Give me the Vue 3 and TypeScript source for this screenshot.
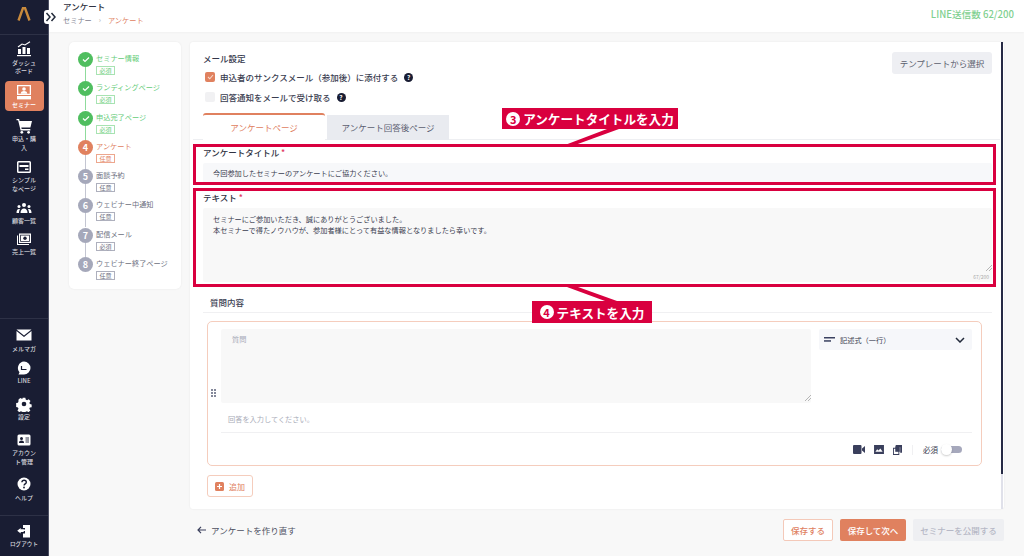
<script setup lang="ts">
type Nav = { label: string; icon: string; active?: boolean }
const topNav: Nav[] = [
  { label: 'ダッシュボード', icon: 'dash' },
  { label: 'セミナー', icon: 'seminar', active: true },
  { label: '申込・購入', icon: 'cart' },
  { label: 'シンプルなページ', icon: 'page' },
  { label: '顧客一覧', icon: 'people' },
  { label: '売上一覧', icon: 'money' },
]
const bottomNav: Nav[] = [
  { label: 'メルマガ', icon: 'mail' },
  { label: 'LINE', icon: 'line' },
  { label: '設定', icon: 'gear' },
  { label: 'アカウント管理', icon: 'account' },
  { label: 'ヘルプ', icon: 'help' },
]
const steps = [
  { n: '', label: 'セミナー情報', tag: '必須', state: 'done' },
  { n: '', label: 'ランディングページ', tag: '必須', state: 'done' },
  { n: '', label: '申込完了ページ', tag: '必須', state: 'done' },
  { n: '4', label: 'アンケート', tag: '任意', state: 'current' },
  { n: '5', label: '面談予約', tag: '任意', state: 'todo' },
  { n: '6', label: 'ウェビナー中通知', tag: '任意', state: 'todo' },
  { n: '7', label: '配信メール', tag: '必須', state: 'todo' },
  { n: '8', label: 'ウェビナー終了ページ', tag: '任意', state: 'todo' },
]
</script>

<template>
  <div class="app">
    <aside class="side">
      <div class="logo">
        <svg width="14" height="14" viewBox="0 0 14 14"><path d="M1.500 13.500 6 1h2l4.500 12.500" fill="none" stroke="#c98a3c" stroke-width="2.400"/></svg>
      </div>
      <nav class="nav nav-top">
        <div v-for="n in topNav" :key="n.label" class="nav-item" :class="{ active: n.active }">
          <svg class="ico" viewBox="0 0 16 16" fill="#fff">
            <template v-if="n.icon === 'dash'">
              <rect x="2" y="8" width="3" height="5"/><rect x="6.500" y="6" width="3" height="7"/><rect x="11" y="7" width="3" height="6"/><rect x="1" y="14" width="14" height="1.200"/>
              <path d="M2 6 6 3l3 1 5-3.200" fill="none" stroke="#fff" stroke-width="1.100"/>
            </template>
            <template v-else-if="n.icon === 'seminar'">
              <path d="M1 1h14v10H1z M2.300 2.300v7.400h11.400V2.300z" fill-rule="evenodd"/><circle cx="8" cy="5" r="1.800"/><path d="M4.700 9.700c.3-2 1.600-2.600 3.300-2.600s3 .6 3.300 2.600z"/><rect x="1" y="12" width="14" height="3.400"/>
            </template>
            <template v-else-if="n.icon === 'cart'">
              <path d="M.5 1h2.600l.5 2H16l-1.600 6.500H5.300l.4 1.600h8.600v1.300H4.600L2.100 2.300H.5z"/><circle cx="5.800" cy="14.300" r="1.400"/><circle cx="12.600" cy="14.300" r="1.400"/>
            </template>
            <template v-else-if="n.icon === 'page'">
              <path d="M2.500 2h11A1.500 1.500 0 0 1 15 3.500v9a1.500 1.500 0 0 1-1.500 1.500h-11A1.500 1.500 0 0 1 1 12.500v-9A1.500 1.500 0 0 1 2.500 2z M2.500 3.500v9h11v-9z" fill-rule="evenodd"/><rect x="3.500" y="6" width="9" height="2"/><rect x="9" y="9.500" width="3.500" height="1.500"/>
            </template>
            <template v-else-if="n.icon === 'people'">
              <circle cx="8" cy="5" r="2"/><circle cx="3" cy="6.500" r="1.500"/><circle cx="13" cy="6.500" r="1.500"/><path d="M4.500 13c0-3 1.500-4.500 3.500-4.500s3.500 1.500 3.500 4.500z"/><path d="M.5 13c0-2.500.8-4 2.500-4 .5 0 .8.100 1 .3-.7.900-1 2.200-1 3.700z"/><path d="M15.500 13c0-2.500-.8-4-2.500-4-.5 0-.8.100-1 .3.700.900 1 2.200 1 3.700z"/>
            </template>
            <template v-else>
              <path d="M3 1.500h12v9.500H3z M4.200 2.700v7.100h9.600V2.700z" fill-rule="evenodd"/><rect x="5" y="3.500" width="8" height="5.500"/><circle cx="9" cy="6.200" r="1.700" fill="#191d33"/><path d="M1 3.500h1V12h11v1H1z"/>
            </template>
          </svg>
          <span class="nav-label">{{ n.label }}</span>
        </div>
      </nav>
      <nav class="nav nav-bottom">
        <div v-for="n in bottomNav" :key="n.label" class="nav-item">
          <svg class="ico" viewBox="0 0 16 16" fill="#fff">
            <template v-if="n.icon === 'mail'">
              <path d="M.5 2.500h15L8 8.500z"/><path d="M.5 4v9.500h15V4L8 10z"/>
            </template>
            <template v-else-if="n.icon === 'line'">
              <path d="M8 1.500a6.500 6.500 0 0 1 0 13H2.500l1-2.300A6.500 6.500 0 0 1 8 1.500z"/><path d="M5.500 6v3.500h5" fill="none" stroke="#191d33" stroke-width="1.200"/>
            </template>
            <template v-else-if="n.icon === 'gear'">
              <path d="M6.500 1h3l.4 2 1.500.7 1.800-1.100 2 2.200-1.200 1.700.5 1.500 2 .5v3l-2 .4-.6 1.500 1.200 1.700-2.100 2-1.700-1.100-1.500.6-.4 2h-3l-.4-2-1.500-.6-1.800 1.100-2-2 1.200-1.800-.6-1.500-2-.4V7l2-.5.6-1.500L1.800 3.300l2-2.100L5.600 2.300l1-.4z" transform="translate(.8 .8) scale(.9)"/><circle cx="8" cy="8" r="2.300" fill="#191d33"/>
            </template>
            <template v-else-if="n.icon === 'account'">
              <rect x="1.500" y="2.500" width="13" height="11" rx="1.500"/><circle cx="5.500" cy="6.500" r="1.500" fill="#191d33"/><path d="M3 11c0-1.800 1-2.500 2.500-2.500S8 9.200 8 11z" fill="#191d33"/><path d="M9.500 6H13M9.500 8H13M9.500 10H13" stroke="#191d33" stroke-width=".9"/>
            </template>
            <template v-else>
              <circle cx="8" cy="8" r="6.500"/><path d="M5.900 6.300C6 4.900 6.900 4.300 8.100 4.300c1.300 0 2.200.8 2.200 1.900 0 1.700-2.200 1.700-2.200 3.300" fill="none" stroke="#191d33" stroke-width="1.400"/><circle cx="8" cy="11.500" r=".9" fill="#191d33"/>
            </template>
          </svg>
          <span class="nav-label">{{ n.label }}</span>
        </div>
      </nav>
      <div class="logout">
        <svg class="ico" viewBox="0 0 16 16" fill="#fff"><path d="M7 2h7v12.500H7v-4h2V8H5V6.500h4V5H7z"/><path d="M5 5 1.500 7.800 5 10.500V9h3V6.500H5z" transform="translate(-.3 0)"/></svg>
        <span class="nav-label">ログアウト</span>
      </div>
    </aside>

    <div class="page">
      <header class="top">
        <button class="toggle" aria-label="開閉">
          <svg width="12" height="10" viewBox="0 0 12 10" fill="none" stroke="#222a3a" stroke-width="1.500"><path d="M1.500 1 5 5 1.500 9M6.500 1 10 5 6.500 9"/></svg>
        </button>
        <div class="crumbs">
          <div class="page-title">アンケート</div>
          <div class="trail"><span>セミナー</span><span class="sep">›</span><span class="here">アンケート</span></div>
        </div>
        <div class="quota">LINE送信数 62/200</div>
      </header>

      <div class="body">
        <section class="stepper">
          <div v-for="(s, i) in steps" :key="s.label" class="step" :class="s.state">
            <div class="rail">
              <span class="dot">
                <svg v-if="s.state === 'done'" width="8" height="7" viewBox="0 0 8 7" fill="none" stroke="#fff" stroke-width="1.200"><path d="M1 3.500 3 5.500 7 1.500"/></svg>
                <template v-else>{{ s.n }}</template>
              </span>
              <span v-if="i < steps.length - 1" class="stem"></span>
            </div>
            <div class="step-text">
              <div class="step-label">{{ s.label }}</div>
              <span class="tag">{{ s.tag }}</span>
            </div>
          </div>
        </section>

        <div class="main-col">
          <section class="card">
            <div class="mail-head">
              <div class="mail-settings">
                <div class="mail-title">メール設定</div>
                <label class="check-row">
                  <span class="box on"><svg width="7" height="6" viewBox="0 0 7 6" fill="none" stroke="#f7d8cb" stroke-width="1.100"><path d="M1 3 2.800 4.800 6 1"/></svg></span>
                  申込者のサンクスメール（参加後）に添付する
                  <span class="q">?</span>
                </label>
                <label class="check-row">
                  <span class="box"></span>
                  回答通知をメールで受け取る
                  <span class="q">?</span>
                </label>
              </div>
              <button class="tpl">テンプレートから選択</button>
            </div>

            <div class="tabs">
              <div class="tab sel">アンケートページ</div>
              <div class="tab">アンケート回答後ページ</div>
            </div>

            <div class="fields">
              <div class="field-label title-label">アンケートタイトル <em>*</em></div>
              <div class="input">今回参加したセミナーのアンケートにご協力ください。</div>
              <div class="field-label text-label">テキスト <em>*</em></div>
              <div class="textarea">
                <div>セミナーにご参加いただき、誠にありがとうございました。</div>
                <div>本セミナーで得たノウハウが、参加者様にとって有益な情報となりましたら幸いです。</div>
                <span class="count">67/200</span>
                <svg class="grip" width="7" height="7" viewBox="0 0 7 7" stroke="#999" stroke-width=".7"><path d="M1 7 7 1M4 7 7 4"/></svg>
              </div>
            </div>

            <div class="q-head">質問内容</div>

            <div class="q-card">
              <div class="drag"><i></i><i></i><i></i><i></i><i></i><i></i></div>
              <div class="q-inner">
                <div class="q-top">
                  <div class="q-area">質問
                    <svg class="grip" width="7" height="7" viewBox="0 0 7 7" stroke="#999" stroke-width=".7"><path d="M1 7 7 1M4 7 7 4"/></svg>
                  </div>
                  <div class="select">
                    <svg width="11" height="5" viewBox="0 0 11 5" fill="#3a4160"><rect width="11" height="1.500"/><rect y="3.200" width="7" height="1.500"/></svg>
                    <span>記述式（一行）</span>
                    <svg class="chev" width="10" height="6" viewBox="0 0 10 6" fill="none" stroke="#222a3a" stroke-width="1.500"><path d="M1 1 5 5 9 1"/></svg>
                  </div>
                </div>
                <div class="answer">回答を入力してください。</div>
                <div class="q-tools">
                  <svg width="12" height="9" viewBox="0 0 12 9" fill="#3a3f5c"><rect width="8.500" height="9" rx="1"/><path d="M9 3.500 12 1v7L9 5.500z"/></svg>
                  <svg width="10" height="9" viewBox="0 0 11 10" fill="#3a3f5c"><path d="M0 0h11v10H0z M1.500 7.500h8L7 4 5 6 3.500 4.800z" fill-rule="evenodd"/></svg>
                  <svg width="9" height="10" viewBox="0 0 10 11" fill="#3a3f5c"><path d="M3 0h7v8.500H8V2.500H3z"/><path d="M0 3h7v8H0z M1 4v6h5V4z" fill-rule="evenodd"/><rect x="2.500" y="1.500" width="5" height="6"/></svg>
                  <span class="tool-sep"></span>
                  <span class="req">必須</span>
                  <span class="switch"><span class="knob"></span></span>
                </div>
              </div>
            </div>

            <button class="add">
              <svg width="9" height="9" viewBox="0 0 9 9"><rect width="9" height="9" rx="1.500" fill="#e0815f"/><path d="M4.500 2v5M2 4.500h5" stroke="#fff" stroke-width="1.200"/></svg>
              追加
            </button>

            <div class="scroll"><span></span></div>
          </section>

          <footer class="foot">
            <div class="back">
              <svg width="9" height="8" viewBox="0 0 9 8" fill="none" stroke="#3a3f5c" stroke-width="1.200"><path d="M4 .8 1 4l3 3.200M1 4h8"/></svg>
              アンケートを作り直す
            </div>
            <div class="foot-btns">
              <button class="btn ghost">保存する</button>
              <button class="btn solid">保存して次へ</button>
              <button class="btn off">セミナーを公開する</button>
            </div>
          </footer>
        </div>
      </div>
    </div>

    <div class="mark mark-title"></div>
    <div class="mark mark-text"></div>
    <svg class="connectors" width="1024" height="556" viewBox="0 0 1024 556">
      <path d="M607 129h12l-44 16h-10z" fill="#d9003f"/>
      <path d="M567 287h11l39 14h-12z" fill="#d9003f"/>
    </svg>
    <div class="callout call-3"><span class="num">3</span>アンケートタイトルを入力</div>
    <div class="callout call-4"><span class="num">4</span>テキストを入力</div>
  </div>
</template>

<style>
html, body { margin: 0; padding: 0; }
</style>

<style scoped>
* { box-sizing: border-box; }
.app {
  position: relative;
  display: flex;
  width: 1024px;
  height: 556px;
  overflow: hidden;
  background: #f8f8f8;
  font-family: "Noto Sans CJK JP", "Noto Sans", sans-serif;
  color: #3a3f52;
  font-size: 8px;
}
.side {
  width: 49px;
  flex: none;
  display: flex;
  flex-direction: column;
  background: #191d33;
  border-right: 1px solid #4b4f63;
}
.logo {
  height: 35px;
  display: flex;
  align-items: center;
  justify-content: center;
  padding-bottom: 6px;
  border-bottom: 1px solid #2d3146;
}
.nav { display: flex; flex-direction: column; align-items: center; }
.nav-top { padding-top: 5px; gap: 5.5px; height: 283px; }
.nav-top .nav-item:last-child .nav-label { margin-top: 0; }
.nav-bottom { padding-top: 7px; gap: 9px; height: 197px; border-top: 1px solid #2d3146; }
.nav-bottom .nav-item:first-child { margin-bottom: -3.5px; }
.nav-item {
  width: 39px;
  display: flex;
  flex-direction: column;
  align-items: center;
  border-radius: 4px;
  padding-top: 1px;
}
.nav-item.active { background: #e0815f; padding: 3px 0 2px; }
.ico { width: 16px; height: 16px; flex: none; }
.nav-label {
  margin-top: 1.500px;
  width: 25px;
  text-align: center;
  font-size: 6px;
  line-height: 8.5px;
  font-weight: 500;
  color: #d5d6dc;
  word-break: break-all;
}
.active .nav-label { color: #fff; margin-top: .5px; }
.logout {
  flex: 1;
  display: flex;
  flex-direction: column;
  align-items: center;
  padding-top: 7px;
  border-top: 1px solid #2d3146;
}
.logout .nav-label { width: 44px; font-size: 5.600px; margin-top: 1px; }

.page { flex: 1; min-width: 0; display: flex; flex-direction: column; }
.top {
  position: relative;
  height: 32px;
  flex: none;
  display: flex;
  justify-content: space-between;
  padding: 0 10px 0 14px;
  background: #fff;
  box-shadow: 0 1px 2px rgba(0, 0, 0, .03);
}
.toggle {
  position: absolute;
  left: -5px;
  top: 10px;
  width: 13px;
  height: 14px;
  padding: 0;
  border: 0;
  border-radius: 3px;
  background: #fff;
  display: flex;
  align-items: center;
  justify-content: center;
}
.page-title { font-size: 8.500px; line-height: 13px; font-weight: 500; color: #2f3242; }
.trail { display: flex; gap: 7px; margin-top: 2px; font-size: 7.200px; line-height: 11px; color: #7d808e; }
.sep { color: #aaa; }
.here { color: #e0815f; }
.quota { font-size: 9.600px; line-height: 28px; font-weight: 500; color: #7fd08f; }

.body { flex: 1; min-height: 0; display: flex; gap: 9px; padding: 10px 20px 0 20px; align-items: flex-start; }
.stepper {
  width: 112px;
  height: 247px;
  flex: none;
  padding: 10px 9px 0 9px;
  background: #fff;
  border-radius: 5px;
  box-shadow: 0 0 2px rgba(0, 0, 0, .08);
}
.step { display: flex; gap: 3px; height: 29.300px; }
.rail { width: 15px; display: flex; flex-direction: column; align-items: center; flex: none; }
.dot {
  width: 15px;
  height: 15px;
  flex: none;
  border-radius: 50%;
  display: flex;
  align-items: center;
  justify-content: center;
  color: #fff;
  font-size: 9px;
  font-weight: 700;
  background: #a5a8ba;
}
.stem { width: 1px; height: 14px; background: #c4c6d2; }
.done .dot { background: #4fbe5f; }
.done .stem { background: #8fdb9c; }
.current .dot { background: #e0815f; }
.step-text { min-width: 0; padding-top: 1px; }
.step-label { font-size: 7.200px; line-height: 11px; white-space: nowrap; color: #6c6f80; }
.done .step-label { color: #65cc78; }
.current .step-label { color: #e0815f; }
.tag {
  display: block;
  margin-top: 2px;
  width: 19px;
  height: 9px;
  border: 1px solid #aeb0bd;
  font-size: 6px;
  line-height: 7px;
  text-align: center;
  color: #6c6f80;
}
.done .tag { border-color: #a8e3b2; color: #65cc78; }
.current .tag { border-color: #eda78e; color: #e0815f; }

.main-col { width: 814px; flex: none; }
.card {
  position: relative;
  height: 467px;
  padding: 0 12px 0 13px;
  background: #fff;
  border-radius: 3px;
  box-shadow: 0 0 2px rgba(0, 0, 0, .08);
}
.mail-head { display: flex; justify-content: space-between; height: 71px; padding-top: 10px; }
.mail-title { font-size: 8.500px; line-height: 12px; font-weight: 500; color: #33364a; }
.check-row { display: flex; align-items: center; gap: 5px; margin: 0 0 0 2px; height: 20px; font-size: 8.500px; font-weight: 500; color: #3a3d50; }
.mail-title + .check-row { margin-top: 3px; }
.box { width: 10px; height: 10px; border-radius: 2px; background: #f1f1f3; display: flex; align-items: center; justify-content: center; }
.box.on { background: #e0815f; }
.q {
  width: 9px;
  height: 9px;
  border-radius: 50%;
  background: #191d33;
  color: #fff;
  font-size: 6.500px;
  line-height: 9px;
  text-align: center;
  font-weight: 700;
  margin-left: 1px;
}
.tpl {
  width: 100px;
  height: 22px;
  border: 0;
  border-radius: 3px;
  background: #eeeff3;
  font: inherit;
  font-size: 8.500px;
  color: #5b5e6e;
}
.tabs { display: flex; gap: 2px; height: 27px; margin: 0 -8px 0 -10px; padding-left: 10px; border-bottom: 1px solid #eeeff2; }
.tab {
  width: 122px;
  height: 25px;
  margin-top: 2px;
  text-align: center;
  font-size: 8.500px;
  line-height: 25px;
  color: #5c5f70;
  background: #e9ebf0;
}
.tab.sel { margin-top: 0; height: 27px; line-height: 25px; border-top: 2px solid #e0815f; border-radius: 3px 3px 0 0; background: #fff; color: #e0815f; }
.field-label { font-size: 8.500px; line-height: 12px; font-weight: 500; color: #2f3242; }
.field-label em { color: #e0395f; font-style: normal; }
.title-label { padding-top: 6px; height: 23px; }
.input { height: 20px; padding-left: 10px; line-height: 20px; font-size: 7.200px; background: #f7f8fa; border-radius: 2px; color: #3a3d50; }
.text-label { height: 25px; padding-top: 8px; }
.textarea { position: relative; height: 74px; padding: 6px 10px; background: #f8f8f8; border-radius: 2px; font-size: 7.200px; line-height: 11px; color: #3a3d50; }
.count { position: absolute; right: 3px; bottom: 2px; font-size: 5px; line-height: 6px; color: #aaa; }
.grip { position: absolute; right: 0; bottom: 11px; }
.q-head { height: 17px; margin-top: 14px; padding-left: 7px; border-bottom: 1px solid #f0f0f2; font-size: 8.500px; line-height: 12px; font-weight: 500; color: #3a3d50; }
.q-card {
  position: relative;
  width: 775px;
  height: 145px;
  margin: 8px 0 0 4px;
  padding: 7px 9px 0 13px;
  border: 1px solid #f5cdbd;
  border-radius: 5px;
}
.drag { position: absolute; left: 3px; top: 67px; width: 6px; display: grid; grid-template-columns: 2px 2px; gap: 1px 1px; }
.drag i { width: 2px; height: 2px; background: #5b6078; border-radius: 50%; }
.q-top { display: flex; gap: 8px; }
.q-area { position: relative; width: 590px; height: 74px; padding: 5px 11px; background: #f8f8f8; border-radius: 2px; font-size: 7.200px; line-height: 10px; color: #a9acb8; }
.q-area .grip { bottom: 2px; }
.select { flex: 1; height: 21px; display: flex; align-items: center; gap: 5px; padding: 0 7px 0 5px; background: #f6f7fa; border-radius: 2px; font-size: 7.200px; color: #3a3d50; }
.chev { margin-left: auto; }
.answer { height: 30px; padding: 11px 0 0 7px; font-size: 7.200px; line-height: 11px; color: #a9acb8; border-bottom: 1px solid #f0f0f2; }
.q-tools { display: flex; justify-content: flex-end; align-items: center; height: 33px; gap: 9px; padding-right: 10px; }
.tool-sep { width: 1px; height: 10px; background: #f0f0f2; margin: 0 1px; }
.req { font-size: 7.500px; color: #3a3d50; }
.switch { position: relative; width: 21px; height: 7px; border-radius: 4px; background: #a6a8bc; margin-left: -6px; }
.knob { position: absolute; left: 0; top: -2px; width: 11px; height: 11px; border-radius: 50%; background: #fff; box-shadow: 0 1px 2px rgba(0, 0, 0, .2); }
.add {
  display: flex;
  align-items: center;
  justify-content: center;
  gap: 5px;
  width: 46px;
  height: 22px;
  margin: 9px 0 0 4px;
  padding: 0;
  border: 1px solid #f5cdbd;
  border-radius: 3px;
  background: #fff;
  font: inherit;
  font-size: 8px;
  color: #e0815f;
}
.scroll { position: absolute; right: 1px; top: 0; bottom: 0; width: 2px; background: #e0e1ea; }
.scroll span { display: block; height: 432px; background: #262a45; }
.foot { display: flex; justify-content: space-between; align-items: center; height: 22px; margin-top: 10px; padding-left: 7px; }
.back { display: flex; align-items: center; gap: 5px; font-size: 8.500px; color: #4c4f60; }
.foot-btns { display: flex; gap: 7px; }
.btn { height: 22px; padding: 0; border-radius: 2px; font: inherit; font-size: 8.500px; font-weight: 500; border: 0; }
.ghost { width: 50px; background: #fff; border: 1px solid #f4c9b9; color: #e0815f; }
.solid { width: 66px; background: #e0815f; color: #fff; }
.off { width: 91px; background: #eeeff2; color: #b6b8c6; }

.mark { position: absolute; left: 193px; width: 803px; border: 3px solid #d9003f; pointer-events: none; }
.mark-title { top: 144px; height: 41px; }
.mark-text { top: 188px; height: 99px; }
.connectors { position: absolute; left: 0; top: 0; pointer-events: none; }
.callout {
  position: absolute;
  display: flex;
  align-items: center;
  justify-content: center;
  gap: 3px;
  background: #d9003f;
  color: #fff;
  font-size: 12.600px;
  font-weight: 700;
  white-space: nowrap;
}
.call-3 { left: 502px; top: 108px; width: 176px; height: 21px; }
.call-4 { left: 532px; top: 301px; width: 120px; height: 22px; }
.num { flex: none; width: 14px; height: 14px; border-radius: 50%; background: #fff; color: #d9003f; font-size: 11px; line-height: 14px; text-align: center; font-weight: 700; }
</style>
